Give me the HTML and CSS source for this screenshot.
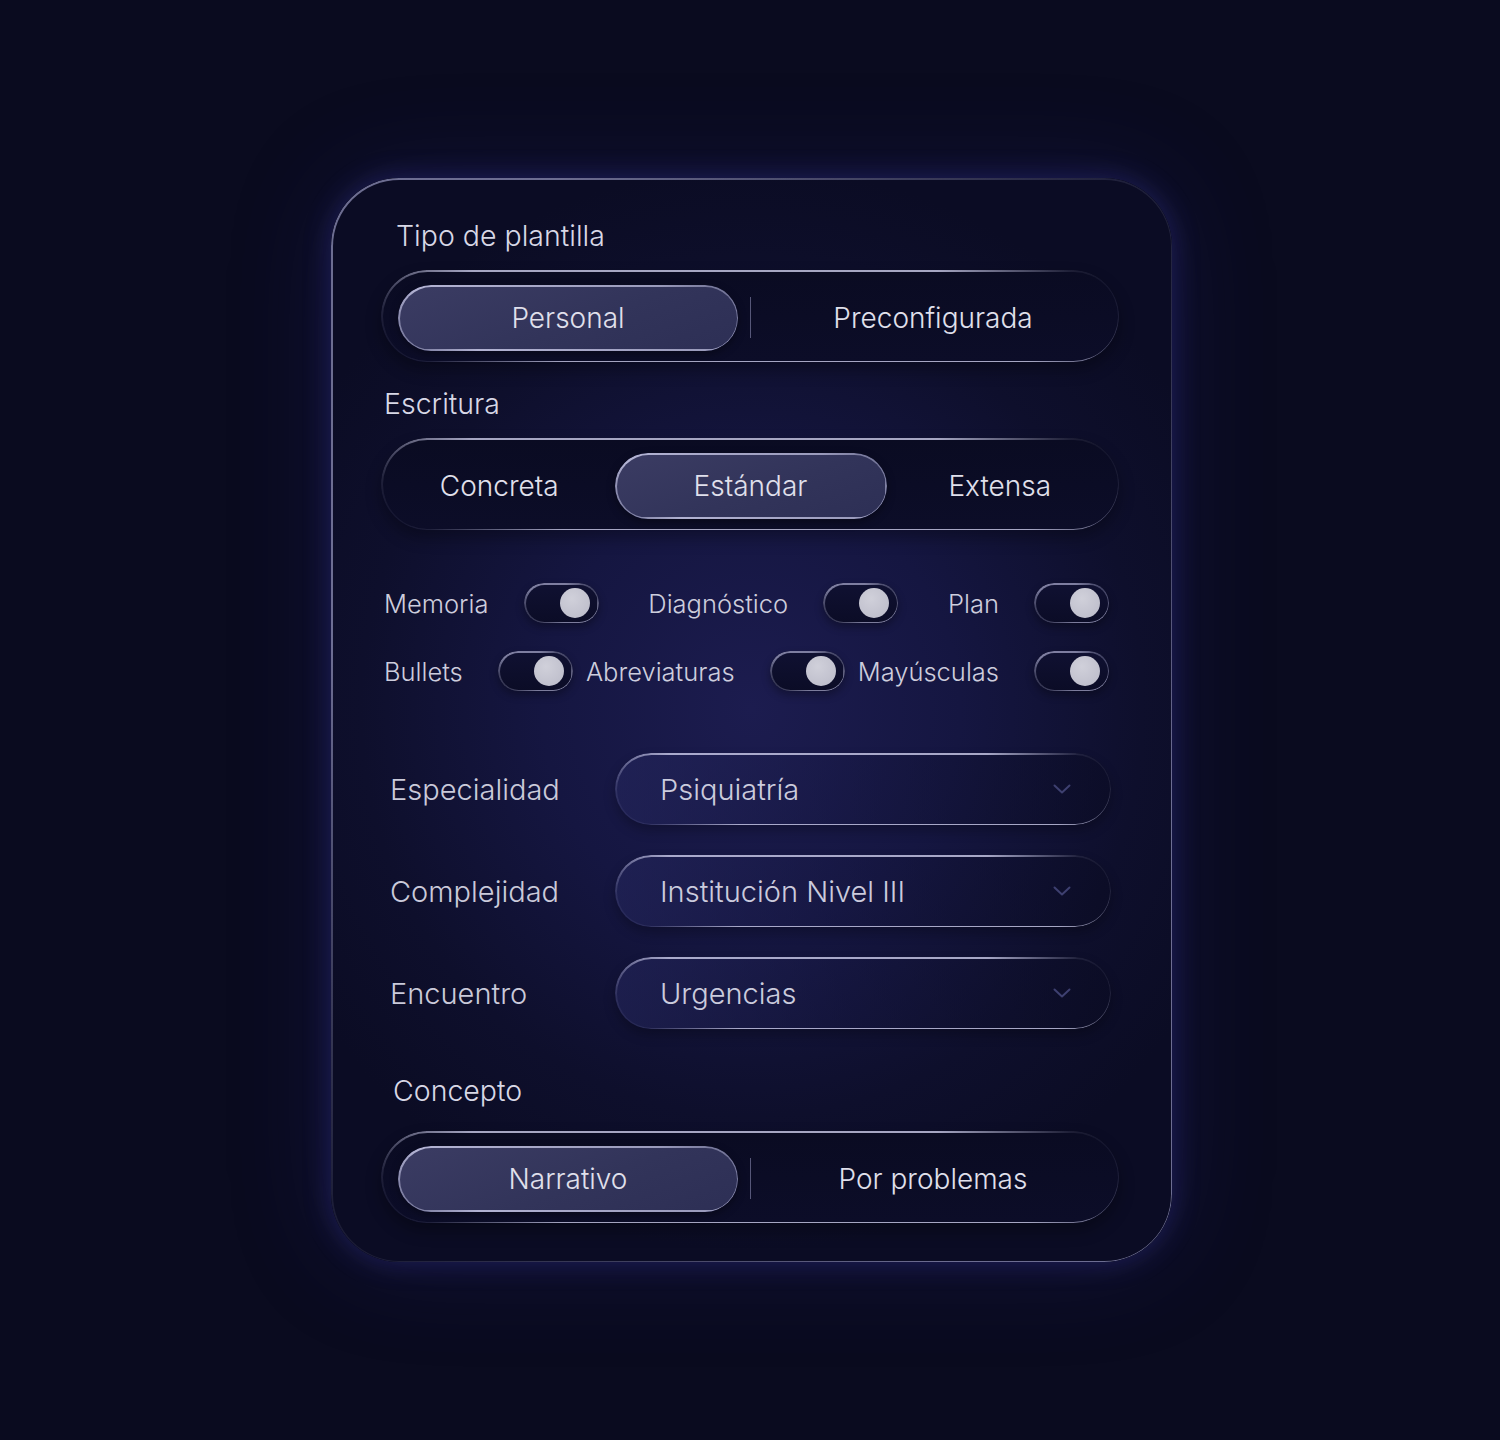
FILE: index.html
```html
<!DOCTYPE html>
<html lang="es">
<head>
  <meta charset="UTF-8">
  <meta name="viewport" content="width=device-width, initial-scale=1.0">
  <title>Plantilla</title>
  <link rel="stylesheet" href="styles.css">
</head>
<body>
  <div class="panel glass">
    <!-- Tipo de plantilla -->
    <p class="field-label field-label--first">Tipo de plantilla</p>
    <div class="segmented segmented--two glass">
      <div class="segment is-active glass">Personal</div>
      <span class="segment-divider"></span>
      <div class="segment">Preconfigurada</div>
    </div>

    <!-- Escritura -->
    <p class="field-label field-label--section">Escritura</p>
    <div class="segmented segmented--three glass">
      <div class="segment">Concreta</div>
      <div class="segment is-active glass">Estándar</div>
      <div class="segment">Extensa</div>
    </div>

    <!-- Switches -->
    <div class="switches">
      <div class="switch-row">
        <div class="switch-item"><span>Memoria</span><span class="switch glass"><span class="switch-knob"></span></span></div>
        <div class="switch-item"><span>Diagnóstico</span><span class="switch glass"><span class="switch-knob"></span></span></div>
        <div class="switch-item"><span>Plan</span><span class="switch glass"><span class="switch-knob"></span></span></div>
      </div>
      <div class="switch-row">
        <div class="switch-item"><span>Bullets</span><span class="switch glass"><span class="switch-knob"></span></span></div>
        <div class="switch-item"><span>Abreviaturas</span><span class="switch glass"><span class="switch-knob"></span></span></div>
        <div class="switch-item"><span>Mayúsculas</span><span class="switch glass"><span class="switch-knob"></span></span></div>
      </div>
    </div>

    <!-- Selects -->
    <div class="selects">
      <div class="select-row">
        <span class="select-label">Especialidad</span>
        <div class="select glass">
          <span>Psiquiatría</span>
          <svg class="chevron" width="18" height="10" viewBox="0 0 18 10"><path d="M1.5 1.5L9 8.5l7.5-7"/></svg>
        </div>
      </div>
      <div class="select-row">
        <span class="select-label">Complejidad</span>
        <div class="select glass">
          <span>Institución Nivel III</span>
          <svg class="chevron" width="18" height="10" viewBox="0 0 18 10"><path d="M1.5 1.5L9 8.5l7.5-7"/></svg>
        </div>
      </div>
      <div class="select-row">
        <span class="select-label">Encuentro</span>
        <div class="select glass">
          <span>Urgencias</span>
          <svg class="chevron" width="18" height="10" viewBox="0 0 18 10"><path d="M1.5 1.5L9 8.5l7.5-7"/></svg>
        </div>
      </div>
    </div>

    <!-- Concepto -->
    <p class="field-label field-label--concept">Concepto</p>
    <div class="segmented segmented--two glass">
      <div class="segment is-active glass">Narrativo</div>
      <span class="segment-divider"></span>
      <div class="segment">Por problemas</div>
    </div>
  </div>
</body>
</html>
```

FILE: styles.css
```css
body {
  margin: 0;
  padding: 178px 0 120px 3px;
  background-color: #0a0b1f;
  font-family: "Inter", "Noto Sans", sans-serif;
  font-weight: 300;
  color: #dcdcea;
}

p {
  margin: 0;
}

/* gradient edge shared by every glass element */
.glass {
  position: relative;
}

.glass::before {
  content: "";
  position: absolute;
  inset: 0;
  border-radius: inherit;
  padding: 1.5px;
  background: linear-gradient(45deg, rgba(210, 210, 240, 0) 0%, rgba(210, 210, 240, 0.1) 6%, rgba(210, 210, 240, 0.78) 22%, rgba(210, 210, 240, 0.78) 78%, rgba(210, 210, 240, 0.1) 94%, rgba(210, 210, 240, 0) 100%);
  -webkit-mask: linear-gradient(#000 0 0) content-box, linear-gradient(#000 0 0);
  -webkit-mask-composite: xor;
  mask-composite: exclude;
  pointer-events: none;
}

.panel {
  width: 841px;
  margin: 0 auto;
  box-sizing: border-box;
  padding: 41px 53px 39px 50px;
  border-radius: 68px;
  background: radial-gradient(ellipse 62% 50% at 50% 49%, #1c1c4f 0%, #151641 40%, #0e0f2c 75%, #0b0c24 100%);
  box-shadow: 0 0 28px rgba(70, 70, 190, 0.32), 0 0 100px rgba(40, 40, 140, 0.25);
}

.panel::before {
  padding: 1.5px;
  background: linear-gradient(45deg, rgba(190, 190, 235, 0.06) 0%, rgba(190, 190, 235, 0.55) 32%, rgba(190, 190, 235, 0.55) 68%, rgba(190, 190, 235, 0.08) 100%);
}

.field-label {
  font-size: 28.5px;
  line-height: 34px;
  color: #d8d8e6;
}

.field-label--first {
  padding-left: 15px;
  margin-bottom: 17px;
}

.field-label--section {
  padding-left: 3px;
  margin: 25px 0 17px;
}

.field-label--concept {
  padding-left: 12px;
  margin: 45px 0 23px;
}

/* segmented controls */
.segmented {
  display: grid;
  align-items: center;
  height: 92px;
  box-sizing: border-box;
  padding: 14px 16px 11px 17px;
  border-radius: 46px;
  background: linear-gradient(180deg, #0a0b22 0%, #0c0d28 100%);
  box-shadow: 0 8px 16px rgba(0, 0, 0, 0.3);
}

.segmented--two {
  grid-template-columns: 1fr 1px 1fr;
  column-gap: 12px;
}

.segmented--three {
  grid-template-columns: 1fr 272px 1fr;
}

.segmented--three .segment:first-child {
  padding-right: 14px;
}

.segmented--three .segment:last-child {
  padding-left: 10px;
}

.segment {
  display: flex;
  align-items: center;
  justify-content: center;
  height: 66px;
  font-size: 28px;
  color: #e0e0ec;
  border-radius: 33px;
}

.segment.is-active {
  background: linear-gradient(160deg, #3b3c63 0%, #32345a 55%, #2d2f55 100%);
  box-shadow: 0 3px 8px rgba(0, 0, 0, 0.35);
}

.segment.is-active::before {
  background: linear-gradient(45deg, rgba(210, 210, 240, 0.35) 0%, rgba(210, 210, 240, 0.8) 20%, rgba(210, 210, 240, 0.65) 80%, rgba(210, 210, 240, 0.35) 100%);
}

.segment-divider {
  width: 1px;
  height: 41px;
  background: rgba(150, 150, 190, 0.55);
}

/* switches */
.switches {
  display: flex;
  flex-direction: column;
  gap: 28px;
  margin: 53px 10px 0 3px;
}

.switch-row {
  display: flex;
  justify-content: space-between;
  align-items: center;
}

.switch-item {
  display: flex;
  align-items: center;
  gap: 35px;
  font-size: 25.5px;
  color: #cdcddd;
}

.switch {
  display: flex;
  align-items: center;
  justify-content: flex-end;
  width: 75px;
  height: 40px;
  box-sizing: border-box;
  padding: 0 9px;
  border-radius: 20px;
  background: linear-gradient(180deg, #101132 0%, #0b0c26 100%);
  box-shadow: 0 4px 8px rgba(0, 0, 0, 0.3);
}

.switch::before {
  background: linear-gradient(45deg, rgba(200, 200, 235, 0.05) 0%, rgba(200, 200, 235, 0.6) 35%, rgba(200, 200, 235, 0.6) 70%, rgba(200, 200, 235, 0.1) 100%);
}

.switch-knob {
  width: 30px;
  height: 30px;
  border-radius: 50%;
  background: radial-gradient(circle at 40% 35%, #d0d0da 0%, #babac8 100%);
}

/* selects */
.selects {
  display: flex;
  flex-direction: column;
  gap: 30px;
  margin: 62px 8px 0 9px;
}

.select-row {
  display: grid;
  grid-template-columns: 225px 1fr;
  align-items: center;
}

.select-label {
  font-size: 29px;
  color: #cacada;
}

.select {
  display: flex;
  align-items: center;
  justify-content: space-between;
  height: 72px;
  box-sizing: border-box;
  padding: 0 40px 0 45px;
  border-radius: 36px;
  font-size: 29px;
  color: #cbcbdd;
  background: linear-gradient(100deg, rgba(38, 40, 96, 0.55) 0%, rgba(24, 25, 70, 0.4) 45%, rgba(10, 11, 34, 0.6) 100%);
  box-shadow: 0 6px 12px rgba(0, 0, 0, 0.25);
}

.chevron path {
  fill: none;
  stroke: #3e4070;
  stroke-width: 2;
  stroke-linecap: round;
  stroke-linejoin: round;
}
```
